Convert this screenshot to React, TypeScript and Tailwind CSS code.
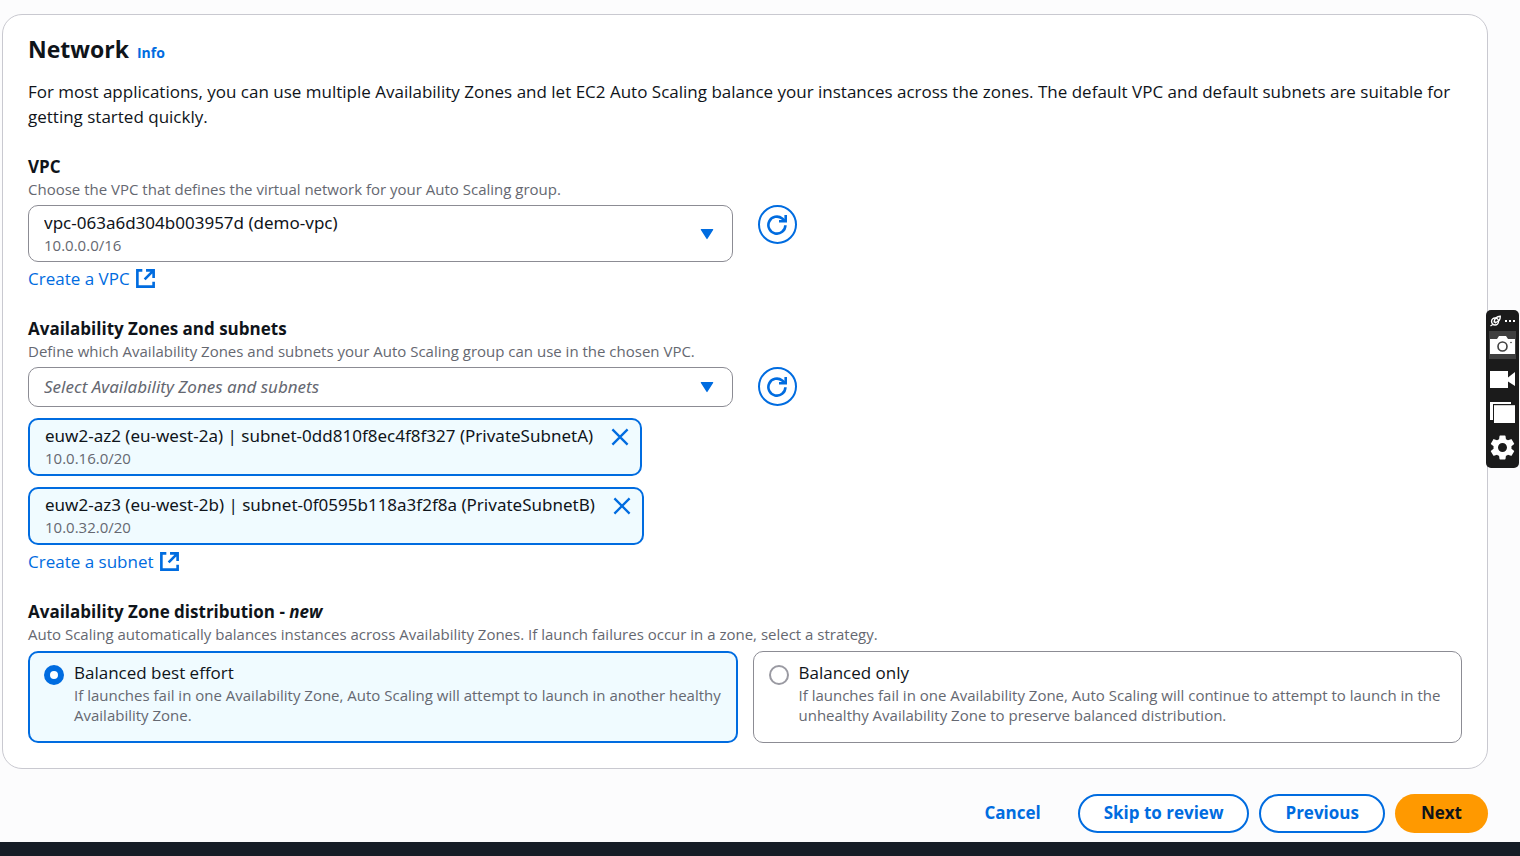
import { useState, type ReactNode } from "react";

function ExternalLinkIcon() {
  return (
    <svg viewBox="0 0 18 18" className="h-[19px] w-[19px] shrink-0" fill="none" stroke="currentColor" strokeWidth="2.5" aria-hidden="true">
      <path d="M6 1.300H1.300v15.400h15.400V12" />
      <path d="M9.500 1.300h7.200V8.500M16.400 1.600 8.200 9.800" />
    </svg>
  );
}

function RefreshIcon() {
  return (
    <svg viewBox="0 0 20 20" className="mr-px h-5 w-5" fill="none" stroke="currentColor" strokeWidth="2.6" aria-hidden="true">
      <path d="M18.400 10.200A8.500 8.500 0 1 1 15.200 3.500L18 6" />
      <path d="M18.700 0V6.300H12" />
    </svg>
  );
}

function CloseIcon() {
  return (
    <svg viewBox="0 0 18 18" className="h-[18px] w-[18px]" fill="none" stroke="currentColor" strokeWidth="2.300" aria-hidden="true">
      <path d="M1.400 1.400l15.200 15.200M16.600 1.400 1.400 16.600" />
    </svg>
  );
}

function Caret() {
  return (
    <svg viewBox="0 0 14 12" className="pointer-events-none col-start-1 row-start-1 mr-[19px] h-3 w-[14px] self-center justify-self-end fill-[#006ce0]" aria-hidden="true">
      <path d="M1.400 1h11.200a.6.6 0 0 1 .5 1L7.500 10.800a.6.6 0 0 1-1 0L.9 2a.6.6 0 0 1 .5-1z" />
    </svg>
  );
}

function RefreshButton({ label }: { label: string }) {
  return (
    <button type="button" aria-label={label} className="flex h-[39px] w-[39px] items-center justify-center rounded-full border-2 border-[#006ce0] text-[#006ce0]">
      <RefreshIcon />
    </button>
  );
}

function ExternalLink({ children }: { children: ReactNode }) {
  return (
    <a href="#" className="mt-1 flex w-fit items-center gap-[6px] text-[17px] leading-[25px] text-[#006ce0]">
      {children}
      <ExternalLinkIcon />
    </a>
  );
}

const hint = "text-[15px] leading-5 text-[#656871]";

function Token({ name, cidr }: { name: string; cidr: string }) {
  return (
    <li className="flex h-[58px] w-fit items-start gap-[18px] rounded-[10px] border-2 border-[#006ce0] bg-[#f0fbff] pt-[3px] pr-[11px] pl-[15px]">
      <div>
        <p className="font-['Noto_Sans',sans-serif] text-[17px] leading-[25px]">{name}</p>
        <p className={hint}>{cidr}</p>
      </div>
      <button type="button" aria-label={"Remove " + name} className="mt-[5px] text-[#006ce0]">
        <CloseIcon />
      </button>
    </li>
  );
}

type TileProps = { id: string; title: string; text: string; checked: boolean; onSelect: () => void };

function Tile({ id, title, text, checked, onSelect }: TileProps) {
  return (
    <label
      htmlFor={id}
      className={
        checked
          ? "flex gap-[10px] rounded-[10px] border-2 border-[#006ce0] bg-[#f0fbff] pt-[7px] pr-2 pb-4 pl-[14px]"
          : "flex gap-[10px] rounded-[10px] border border-[#8c8c94] bg-white pt-2 pr-[9px] pb-[17px] pl-[15px]"
      }
    >
      <input
        id={id}
        type="radio"
        name="distribution"
        checked={checked}
        onChange={onSelect}
        aria-describedby={id + "-text"}
        className="mt-[5px] h-5 w-5 shrink-0 appearance-none rounded-full border-2 border-[#9a9aa2] bg-white checked:border-[6px] checked:border-[#006ce0]"
      />
      <span>
        <span className="block text-[17px] leading-[25px]">{title}</span>
        <span id={id + "-text"} className={"block " + hint}>{text}</span>
      </span>
    </label>
  );
}

function CaptureToolbar() {
  return (
    <div role="toolbar" aria-label="Capture" className="absolute top-[310px] right-px flex w-[33px] flex-col items-center rounded-[5px] bg-[#1b1b1b] pb-2 text-white">
      <div className="flex h-[21px] items-center gap-1">
        <svg viewBox="0 0 12 12" className="h-3 w-[11px]" fill="none" stroke="currentColor" strokeWidth="1.500" aria-hidden="true">
          <circle cx="5.500" cy="6.500" r="3.800" />
          <path d="M.5 11.500 3 9.800M4.500 6.800C5 3.500 7.500 1 11.200.8c.2 3.200-1.700 5.700-4.700 6.700zM4.500 6.800l2 1.500" />
        </svg>
        <svg viewBox="0 0 10 2" className="h-[2px] w-[10px] fill-current" aria-hidden="true">
          <path d="M0 0h2v2H0zM4 0h2v2H4zM8 0h2v2H8z" />
        </svg>
      </div>
      <button type="button" aria-label="Take photo" className="flex h-7 w-[27px] items-center justify-center bg-[#3f3f3f]">
        <svg viewBox="0 0 25 20" className="h-5 w-[25px]" aria-hidden="true">
          <path fill="#fff" d="M0 4h7l2-3h7l2 3h7v15H0z" />
          <circle cx="12.500" cy="11.500" r="4.500" fill="none" stroke="#3f3f3f" strokeWidth="1.600" />
          <circle cx="21" cy="7.500" r=".8" fill="#3f3f3f" />
        </svg>
      </button>
      <button type="button" aria-label="Record video" className="mt-3">
        <svg viewBox="0 0 25 17" className="h-[17px] w-[25px] fill-white" aria-hidden="true">
          <path d="M0 0h18v6.500L25 1v14l-7-4.500V17H0z" />
        </svg>
      </button>
      <button type="button" aria-label="Gallery" className="mt-[14px]">
        <svg viewBox="0 0 25 21" className="h-[21px] w-[25px] fill-white" aria-hidden="true">
          <path d="M0 0h21v2H3v16H0z" />
          <path d="M4 3.200h21V21H4z" />
        </svg>
      </button>
      <button type="button" aria-label="Settings" className="mt-3">
        <svg viewBox="2 2 20 20" className="h-[25px] w-[25px] fill-white" aria-hidden="true">
          <path d="M19.140 12.940c.04-.3.060-.61.060-.94 0-.32-.02-.64-.07-.94l2.030-1.580a.49.49 0 0 0 .12-.61l-1.920-3.320a.488.488 0 0 0-.59-.22l-2.390.96c-.5-.38-1.030-.7-1.620-.94l-.36-2.540a.484.484 0 0 0-.48-.41h-3.840c-.24 0-.43.17-.47.41l-.36 2.540c-.59.24-1.130.57-1.620.94l-2.390-.96c-.22-.08-.47 0-.59.22L2.740 8.870c-.12.21-.08.47.12.61l2.030 1.580c-.05.3-.09.63-.09.94s.02.64.07.94l-2.030 1.580a.49.49 0 0 0-.12.61l1.920 3.320c.12.22.37.29.59.22l2.390-.96c.5.38 1.030.7 1.620.94l.36 2.540c.05.24.24.41.48.41h3.840c.24 0 .44-.17.47-.41l.36-2.540c.59-.24 1.130-.56 1.620-.94l2.390.96c.22.08.47 0 .59-.22l1.920-3.320c.12-.22.07-.47-.12-.61l-2.010-1.580zM12 15.600A3.610 3.610 0 0 1 8.400 12c0-1.980 1.620-3.600 3.600-3.600s3.600 1.620 3.600 3.600-1.620 3.600-3.600 3.600z" />
        </svg>
      </button>
    </div>
  );
}

const outlineButton = "h-[39px] rounded-full border-2 border-[#006ce0] bg-white px-6 pb-[2px] text-[#006ce0]";

export default function App() {
  const [distribution, setDistribution] = useState("best-effort");

  return (
    <div className="relative flex min-h-screen flex-col bg-[#fcfcfd] font-['Open_Sans','Noto_Sans',sans-serif] text-[#0f141a]">
      <main className="flex-1 pt-[14px] pr-8 pl-[2px]">
        <section className="rounded-[20px] border border-[#c9c9d0] bg-white px-[25px] pt-[19px] pb-[25px]">
          <div className="flex items-baseline gap-2">
            <h2 className="text-[23px] leading-[30px] font-bold">Network</h2>
            <a href="#" className="text-[14px] leading-5 font-bold text-[#006ce0]">Info</a>
          </div>
          <p className="mt-[15px] text-[17px] leading-[25px]">
            For most applications, you can use multiple Availability Zones and let EC2 Auto Scaling balance your instances across the zones. The default VPC and default subnets are suitable for getting started quickly.
          </p>

          <div className="mt-[25px]">
            <label htmlFor="vpc" className="block text-[17px] leading-[25px] font-bold">VPC</label>
            <p className={hint}>Choose the VPC that defines the virtual network for your Auto Scaling group.</p>
            <div className="mt-[6px] grid grid-cols-2 gap-[25px]">
              <div className="grid">
                <select id="vpc" className="col-start-1 row-start-1 h-[57px] w-full appearance-none rounded-[10px] border border-[#8c8c94] bg-white pr-12 pb-[22px] pl-[15px] font-['Noto_Sans',sans-serif] text-[17px]">
                  <option>vpc-063a6d304b003957d (demo-vpc)</option>
                </select>
                <span className={"pointer-events-none col-start-1 row-start-1 mb-[7px] ml-4 self-end " + hint}>10.0.0.0/16</span>
                <Caret />
              </div>
              <RefreshButton label="Refresh VPCs" />
            </div>
            <ExternalLink>Create a VPC</ExternalLink>
          </div>

          <div className="mt-[25px]">
            <label htmlFor="subnets" className="block text-[17px] leading-[25px] font-bold">Availability Zones and subnets</label>
            <p className={hint}>Define which Availability Zones and subnets your Auto Scaling group can use in the chosen VPC.</p>
            <div className="mt-[6px] grid grid-cols-2 gap-[25px]">
              <div className="grid">
                <select id="subnets" className="col-start-1 row-start-1 h-10 w-full appearance-none rounded-[10px] border border-[#8c8c94] bg-white pr-12 pl-[15px] font-['Noto_Sans',sans-serif] text-[17px] text-[#656871] italic">
                  <option>Select Availability Zones and subnets</option>
                </select>
                <Caret />
              </div>
              <RefreshButton label="Refresh subnets" />
            </div>
            <ul className="mt-[11px] flex flex-col gap-[11px]">
              <Token name="euw2-az2 (eu-west-2a) | subnet-0dd810f8ec4f8f327 (PrivateSubnetA)" cidr="10.0.16.0/20" />
              <Token name="euw2-az3 (eu-west-2b) | subnet-0f0595b118a3f2f8a (PrivateSubnetB)" cidr="10.0.32.0/20" />
            </ul>
            <ExternalLink>Create a subnet</ExternalLink>
          </div>

          <fieldset className="mt-[25px]">
            <legend className="block text-[17px] leading-[25px] font-bold">
              Availability Zone distribution - <em>new</em>
            </legend>
            <p className={hint}>Auto Scaling automatically balances instances across Availability Zones. If launch failures occur in a zone, select a strategy.</p>
            <div className="mt-[7px] grid grid-cols-2 gap-[15px]">
              <Tile
                id="best-effort"
                title="Balanced best effort"
                text="If launches fail in one Availability Zone, Auto Scaling will attempt to launch in another healthy Availability Zone."
                checked={distribution === "best-effort"}
                onSelect={() => setDistribution("best-effort")}
              />
              <Tile
                id="balanced-only"
                title="Balanced only"
                text="If launches fail in one Availability Zone, Auto Scaling will continue to attempt to launch in the unhealthy Availability Zone to preserve balanced distribution."
                checked={distribution === "balanced-only"}
                onSelect={() => setDistribution("balanced-only")}
              />
            </div>
          </fieldset>
        </section>

        <div className="flex justify-end gap-[10px] pt-[25px] pb-[9px] text-[17px] font-bold">
          <button type="button" className="h-[39px] px-[27px] pb-[2px] text-[#006ce0]">Cancel</button>
          <button type="button" className={outlineButton}>Skip to review</button>
          <button type="button" className={outlineButton}>Previous</button>
          <button type="button" className="h-[39px] rounded-full bg-[#ff9900] px-[26px] pb-[2px]">Next</button>
        </div>
      </main>
      <footer className="h-[14px] bg-[#161d26]" />
      <CaptureToolbar />
    </div>
  );
}
